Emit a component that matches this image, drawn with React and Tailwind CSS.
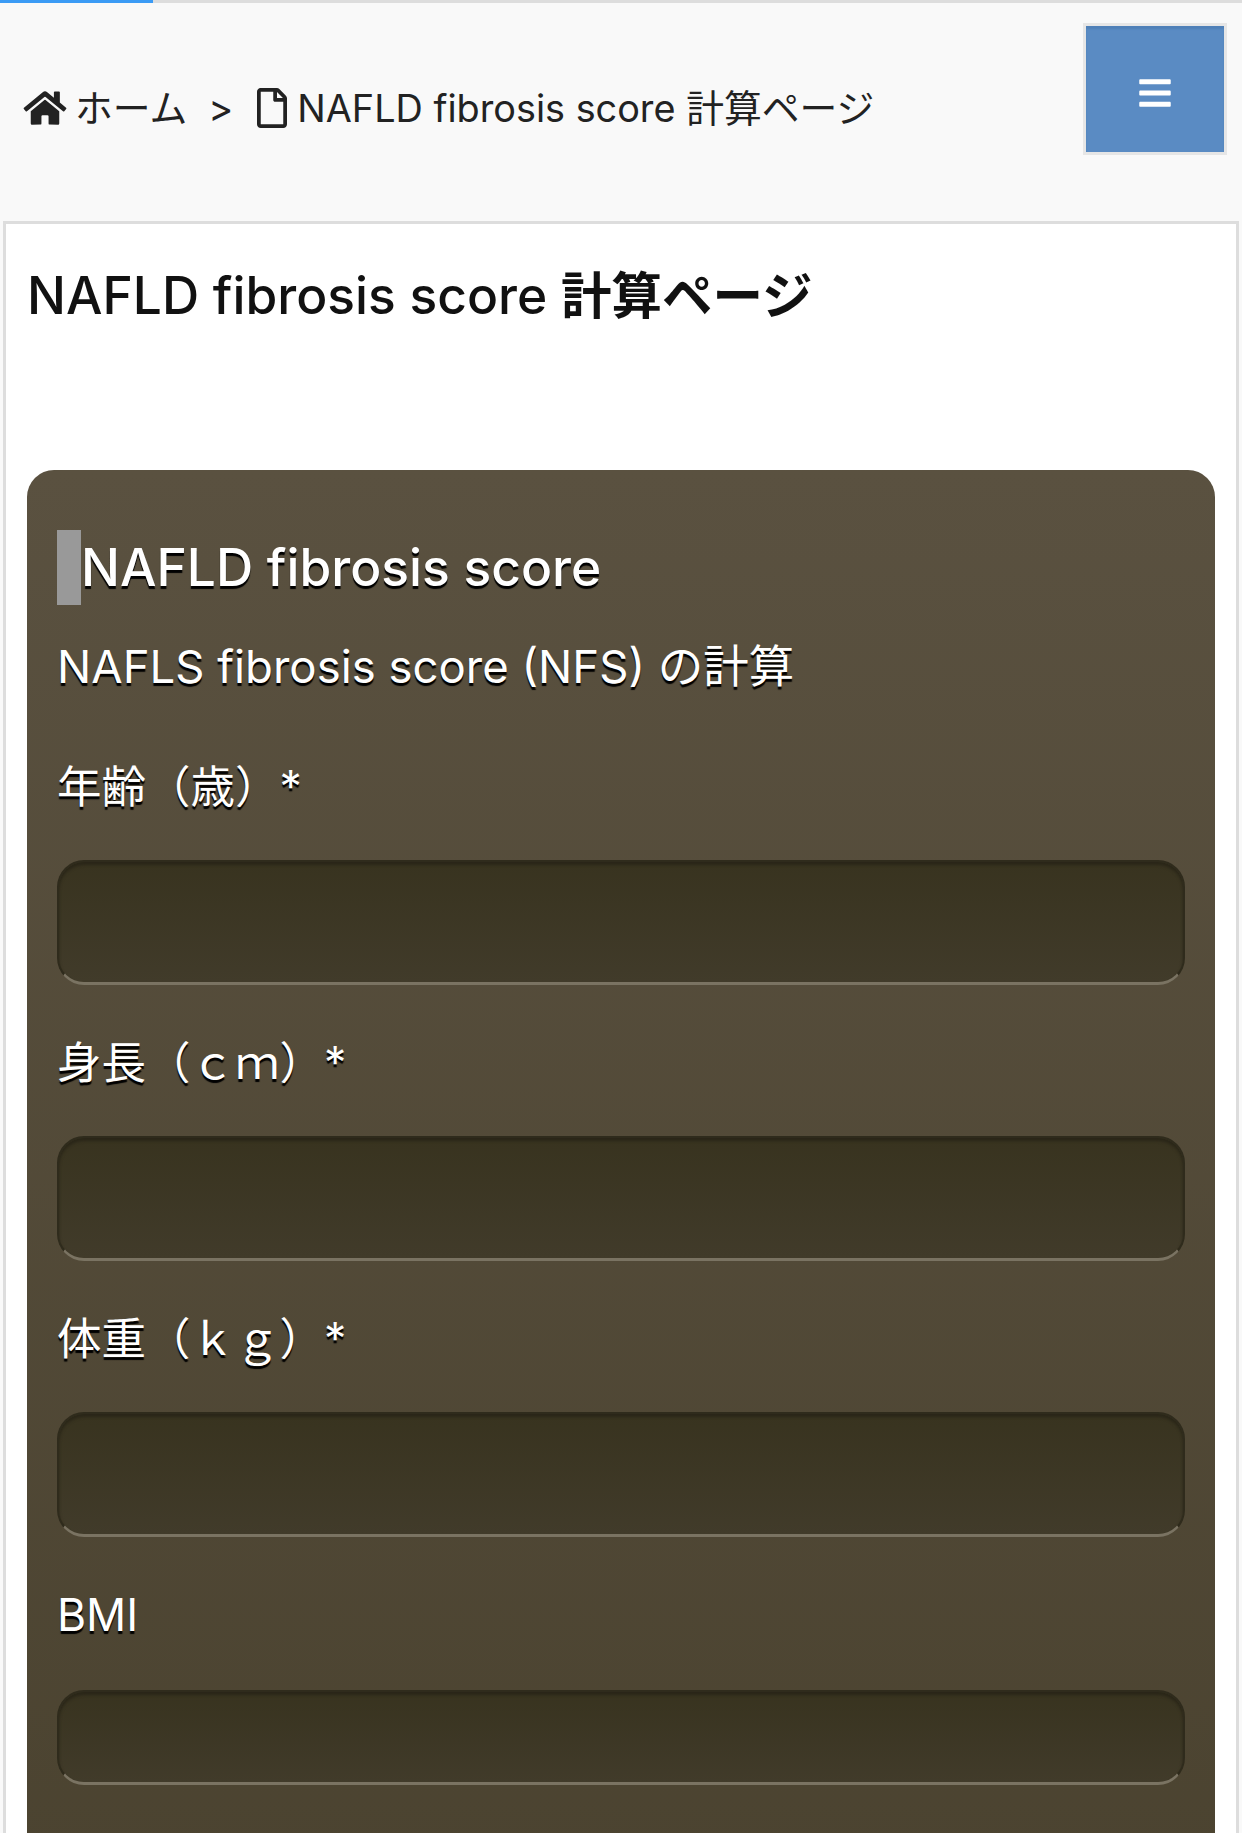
import { FaHome, FaRegFile, FaBars } from 'react-icons/fa'

const FIELDS = [
  { label: '年齢（歳）*', h: 'h-[125px]', gap: 'mb-[44px]' },
  { label: '身長（ｃｍ）*', h: 'h-[125px]', gap: 'mb-[44px]' },
  { label: '体重（ｋｇ）*', h: 'h-[125px]', gap: 'mb-[44px]' },
  { label: 'BMI', h: 'h-[95px]', gap: 'mb-[46px]' },
]

const FONT = "font-['Inter','Noto_Sans_CJK_JP',sans-serif]"

export default function App() {
  return (
    <div className={`h-[1833px] overflow-hidden bg-[#f9f9f9] ${FONT}`}>
      {/* Progress */}
      <div className="h-[3px] bg-[#dddddd]">
        <div className="h-full w-[153px] bg-[#3b9bf5]" />
      </div>

      {/* Breadcrumb */}
      <div className="h-[218px] pl-[23px] pr-[15px] flex items-start justify-between">
        <div className="flex items-center h-[50px] mt-[80px] text-[37.8px] text-[#222222] whitespace-nowrap">
          <FaHome className="w-[44px] h-[38px] mr-[8px]" />
          <span>ホーム</span>
          <span className="ml-[21px] mr-[24px]">&gt;</span>
          <FaRegFile className="w-[30px] h-[40px] mr-[10px]" />
          <span>NAFLD fibrosis score 計算ページ</span>
        </div>
        <button className="mt-[20px] w-[144px] h-[132px] border-[3px] border-[#e6e6e6] bg-[#5a8bc3] shadow-[inset_0_3px_2px_#4f80b8] flex items-center justify-center text-white">
          <FaBars className="w-[32px] h-[36px] mt-[8px]" />
        </button>
      </div>

      {/* Main */}
      <main className="mx-[3px] bg-white border-[3px] border-[#dddddd] px-[21px] pt-[38px]">
        <h1 className="text-[51.5px] leading-[66px] font-medium text-[#111111] mb-[141px]">
          NAFLD fibrosis score <span className="text-[50.5px] font-semibold">計算ページ</span>
        </h1>

        <section className="rounded-[27px] pl-[30px] pr-[30px] pt-[60px] pb-[60px] bg-gradient-to-b from-[#5a5140] to-[#4b4330] text-white [text-shadow:0_3px_1px_#000]">
          <h2 className="h-[75px] border-l-[24px] border-[#999999] text-[51.5px] leading-[75px] font-medium mb-[32px]">NAFLD fibrosis score</h2>
          <p className="text-[45.5px] leading-[60px] mb-[61px]">NAFLS fibrosis score (NFS) の計算</p>

          {FIELDS.map(f => (
            <div key={f.label} className="mb-[49px]">
              <label className={`block text-[44.5px] leading-[58px] ${f.gap}`}>{f.label}</label>
              <div className={`${f.h} rounded-[27px] bg-gradient-to-b from-[#38331f] to-[#413b2a] border-[2px] border-[#2f2b1c] border-b-[#7a7362] border-b-[3px] shadow-[inset_0_3px_3px_#2a2618]`} />
            </div>
          ))}
        </section>
      </main>
    </div>
  )
}
